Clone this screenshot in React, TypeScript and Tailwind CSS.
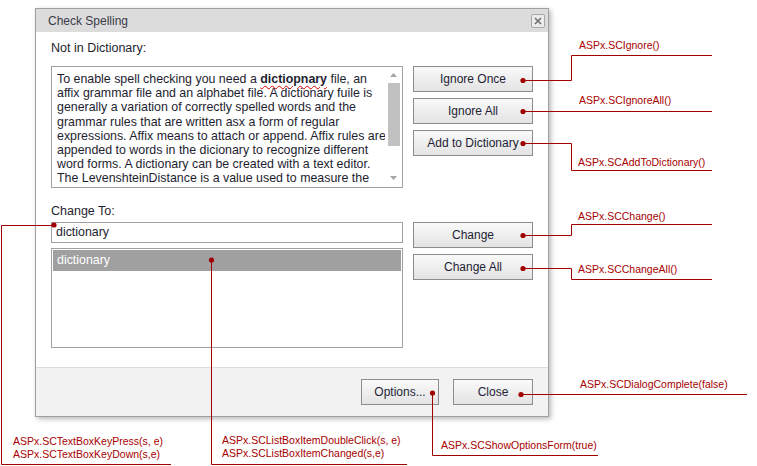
import React from "react";

const Btn = ({ label, w = "w-[120px]" }: { label: string; w?: string }) => (
  <div
    className={`${w} h-[26px] border border-[#8c8c8c] bg-gradient-to-b from-[#fafafa] to-[#e3e3e3] flex items-center justify-center text-[12px] text-[#1e1e36]`}
  >
    {label}
  </div>
);

const Label = ({ x, cy, children }: { x: number; cy: number; children: React.ReactNode }) => (
  <div
    className="absolute whitespace-nowrap text-[10.5px] leading-[13px] text-[#a80000]"
    style={{ left: x, top: cy - 6.5 }}
  >
    {children}
  </div>
);

export default function App() {
  const lines: React.ReactNode[] = [
    <>
      To enable spell checking you need a{" "}
      <span className="font-bold underline decoration-wavy decoration-[#e00000] decoration-1 underline-offset-2">
        dictiopnary
      </span>{" "}
      file, an
    </>,
    "affix grammar file and an alphabet file. A dictionary fuile is",
    "generally a variation of correctly spelled words and the",
    "grammar rules that are written asx a form of regular",
    "expressions. Affix means to attach or append. Affix rules are",
    "appended to words in the dicionary to recognize different",
    "word forms. A dictionary can be created with a text editor.",
    "The LevenshteinDistance is a value used to measure the",
    "amount of difference between two sequences of words",
  ];

  const red = "#a00000";

  return (
    <div className="relative w-[757px] h-[466px] bg-white overflow-hidden pt-[8px] pl-[35px] font-['Liberation_Sans',Arial,sans-serif]">
      {/* Dialog */}
      <div className="w-[514px] h-[409px] border border-[#a0a0a0] bg-white flex flex-col shadow-[2px_2px_5px_rgba(0,0,0,0.28)]">
        {/* Header */}
        <div className="h-[23px] bg-[#dcdcdc] flex items-center justify-between pl-[12px] pr-[3px]">
          <span className="text-[12px] text-[#3a3a4a]">Check Spelling</span>
          <div className="w-[14px] h-[14px] rounded-[2px] border border-[#a8a8a8] bg-[#ececec] flex items-center justify-center">
            <svg width="8" height="8" viewBox="0 0 8 8">
              <path d="M1 1 L7 7 M7 1 L1 7" stroke="#6e6e6e" strokeWidth="1.6" />
            </svg>
          </div>
        </div>

        {/* Body */}
        <div className="h-[335px] px-[15px] pt-[8px] text-[12.5px] text-[#1e1e30]">
          <div className="h-[16px] leading-[16px]">Not in Dictionary:</div>
          <div className="mt-[10px] flex gap-[10px]">
            <div className="w-[352px] h-[122px] border border-[#a0a0a0] flex">
              <div className="flex-1 overflow-hidden pl-[5px] pt-[5px] text-[12.4px] leading-[14.2px]">
                {lines.map((l, i) => (
                  <div key={i} className="whitespace-nowrap">
                    {l}
                  </div>
                ))}
              </div>
              <div className="w-[17px] flex flex-col bg-white">
                <div className="h-[16px] flex items-center justify-center">
                  <svg width="7" height="4" viewBox="0 0 7 4">
                    <path d="M0 4 L3.5 0 L7 4 Z" fill="#a6a6a6" />
                  </svg>
                </div>
                <div className="h-[63px] ml-[3px] mr-[2px] bg-[#c1c1c1]" />
                <div className="flex-1" />
                <div className="h-[18px] flex items-center justify-center">
                  <svg width="7" height="4" viewBox="0 0 7 4">
                    <path d="M0 0 L3.5 4 L7 0 Z" fill="#a6a6a6" />
                  </svg>
                </div>
              </div>
            </div>
            <div className="w-[120px] flex flex-col gap-[6px]">
              <Btn label="Ignore Once" />
              <Btn label="Ignore All" />
              <Btn label="Add to Dictionary" />
            </div>
          </div>

          <div className="mt-[15px] h-[16px] leading-[16px]">Change To:</div>
          <div className="mt-[3px] flex gap-[10px]">
            <div className="w-[352px] flex flex-col gap-[5px]">
              <div className="h-[21px] border border-[#a0a0a0] flex items-center pl-[4px] text-[12.4px]">dictionary</div>
              <div className="h-[100px] border border-[#a0a0a0] p-[1px]">
                <div className="h-[21px] bg-[#a0a0a0] text-white flex items-center pl-[4px] text-[12.4px]">dictionary</div>
              </div>
            </div>
            <div className="w-[120px] flex flex-col gap-[6px]">
              <Btn label="Change" />
              <Btn label="Change All" />
            </div>
          </div>
        </div>

        {/* Footer */}
        <div className="flex-1 border-t border-[#dcdcdc] bg-[#f2f2f2] flex justify-end items-start pt-[11px] pr-[15px] gap-[14px]">
          <Btn label="Options..." w="w-[78px]" />
          <Btn label="Close" w="w-[80px]" />
        </div>
      </div>

      {/* Annotation lines */}
      <svg className="absolute left-0 top-0" width="757" height="466" viewBox="0 0 757 466">
        <g stroke={red} strokeWidth="1" fill="none">
          <path d="M523 80.5 H571.5 V55.5 H712" />
          <path d="M523 111.5 H712" />
          <path d="M523 143.5 H571.5 V170.5 H712" />
          <path d="M523 235.5 H571.5 V224.5 H712" />
          <path d="M523 268.5 H571.5 V279.5 H712" />
          <path d="M521 394.5 H747" />
          <path d="M432.5 393 V455.5 H598" />
          <path d="M54 225.5 H1.5 V464.5 H171" />
          <path d="M211.5 260 V464.5 H407" />
        </g>
        <g fill={red}>
          <circle cx="523" cy="80.5" r="2.6" />
          <circle cx="523" cy="111.5" r="2.6" />
          <circle cx="523" cy="143.5" r="2.6" />
          <circle cx="523" cy="235.5" r="2.6" />
          <circle cx="523" cy="268.5" r="2.6" />
          <circle cx="521" cy="394.5" r="2.6" />
          <circle cx="432.5" cy="393" r="2.6" />
          <circle cx="54" cy="225" r="2.6" />
          <circle cx="211.5" cy="260" r="2.6" />
        </g>
      </svg>

      <Label x={579} cy={45}>ASPx.SCIgnore()</Label>
      <Label x={579} cy={100}>ASPx.SCIgnoreAll()</Label>
      <Label x={578} cy={162}>ASPx.SCAddToDictionary()</Label>
      <Label x={578} cy={216}>ASPx.SCChange()</Label>
      <Label x={578} cy={269}>ASPx.SCChangeAll()</Label>
      <Label x={580} cy={384}>ASPx.SCDialogComplete(false)</Label>
      <Label x={441} cy={445}>ASPx.SCShowOptionsForm(true)</Label>
      <Label x={13} cy={441.5}>ASPx.SCTextBoxKeyPress(s, e)</Label>
      <Label x={13} cy={454}>ASPx.SCTextBoxKeyDown(s,e)</Label>
      <Label x={222} cy={440}>ASPx.SCListBoxItemDoubleClick(s, e)</Label>
      <Label x={222} cy={453}>ASPx.SCListBoxItemChanged(s,e)</Label>
    </div>
  );
}
